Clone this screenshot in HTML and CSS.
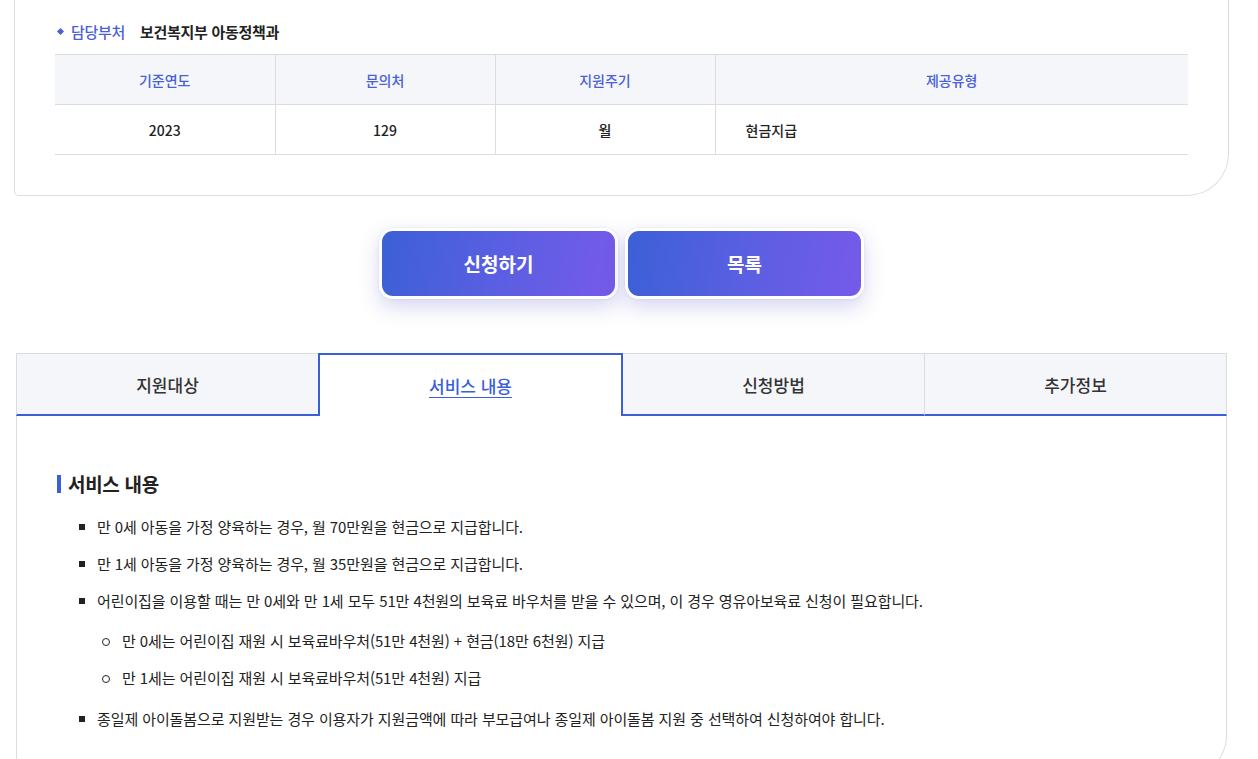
FILE: index.html
```html
<!DOCTYPE html>
<html lang="ko">
<head>
<meta charset="utf-8">
<link rel="stylesheet" href="styles.css">
</head>
<body>
<div class="wrap">
  <section class="card">
    <div class="dept">
      <span class="dot"></span>
      <span class="dept-label">담당부처</span>
      <span class="dept-value">보건복지부 아동정책과</span>
    </div>
    <table class="info">
      <thead>
        <tr><th class="c1">기준연도</th><th class="c2">문의처</th><th class="c3">지원주기</th><th class="c4">제공유형</th></tr>
      </thead>
      <tbody>
        <tr><td>2023</td><td>129</td><td>월</td><td class="left">현금지급</td></tr>
      </tbody>
    </table>
  </section>

  <div class="actions">
    <a class="btn">신청하기</a>
    <a class="btn">목록</a>
  </div>

  <section class="tabs-box">
    <nav class="tabs">
      <div class="tab">지원대상</div>
      <div class="tab active"><span>서비스 내용</span></div>
      <div class="tab">신청방법</div>
      <div class="tab">추가정보</div>
    </nav>
    <div class="panel">
      <h3 class="panel-title">서비스 내용</h3>
      <ul class="list">
        <li>만 0세 아동을 가정 양육하는 경우, 월 70만원을 현금으로 지급합니다.</li>
        <li>만 1세 아동을 가정 양육하는 경우, 월 35만원을 현금으로 지급합니다.</li>
        <li>어린이집을 이용할 때는 만 0세와 만 1세 모두 51만 4천원의 보육료 바우처를 받을 수 있으며, 이 경우 영유아보육료 신청이 필요합니다.
          <ul class="sub">
            <li>만 0세는 어린이집 재원 시 보육료바우처(51만 4천원) + 현금(18만 6천원) 지급</li>
            <li>만 1세는 어린이집 재원 시 보육료바우처(51만 4천원) 지급</li>
          </ul>
        </li>
        <li>종일제 아이돌봄으로 지원받는 경우 이용자가 지원금액에 따라 부모급여나 종일제 아이돌봄 지원 중 선택하여 신청하여야 합니다.</li>
      </ul>
    </div>
  </section>
</div>
</body>
</html>
```

FILE: styles.css
```css
* { box-sizing: border-box; }
html, body { margin: 0; padding: 0; background: #fff; }
body {
  font-family: "Noto Sans CJK KR", "Noto Sans", sans-serif;
  color: #222;
}
.wrap {
  width: 1215px;
  margin-left: 14px;
}
.card {
  border: 1px solid #dedede;
  border-top: none;
  border-bottom-right-radius: 42px;
  border-bottom-left-radius: 5px;
  padding: 20px 40px 40px 40px;
}
.dept {
  display: flex;
  align-items: center;
  height: 22px;
  font-size: 15px;
  font-weight: 700;
  letter-spacing: -0.3px;
}
.dot {
  width: 5px;
  height: 5px;
  background: #4a62d8;
  transform: rotate(45deg);
  margin: 0 8px 0 3px;
}
.dept-label { color: #4a5fd8; margin-right: 15px; font-weight: 500; }
.dept-value { color: #222; }
.info {
  width: 100%;
  margin-top: 12px;
  border-collapse: collapse;
  table-layout: fixed;
  font-size: 14px;
}
.info th {
  background: #f5f6fa;
  color: #4a5fd8;
  font-weight: 500;
  height: 50px;
  border-top: 1px solid #dcdcdc;
  border-bottom: 1px solid #dcdcdc;
  border-left: 1px solid #dcdcdc;
}
.info th:first-child, .info td:first-child { border-left: none; }
.info .c1, .info .c2, .info .c3 { width: 220px; }
.info td {
  height: 50px;
  text-align: center;
  font-weight: 500;
  color: #222;
  border-bottom: 1px solid #dcdcdc;
  border-left: 1px solid #dcdcdc;
}
.info td.left { text-align: left; padding-left: 30px; }

.actions {
  display: flex;
  justify-content: center;
  gap: 7px;
  margin-top: 32px;
}
.btn {
  width: 239px;
  height: 71px;
  display: flex;
  align-items: center;
  justify-content: center;
  border: 3px solid #fff;
  border-radius: 14px;
  background: linear-gradient(100deg, #3b60d6 0%, #5a5fe2 50%, #765ae9 100%);
  color: #fff;
  font-size: 19px;
  font-weight: 700;
  box-shadow: 0 8px 20px rgba(90, 90, 200, 0.25), 0 0 2px rgba(90, 90, 200, 0.2);
}

.tabs-box {
  margin: 54px 2px 0 2px;
}
.tabs {
  display: flex;
}
.tab {
  flex: 1;
  height: 63px;
  display: flex;
  align-items: center;
  justify-content: center;
  background: #f5f6fa;
  border-top: 1px solid #dcdcdc;
  border-left: 1px solid #dcdcdc;
  border-bottom: 2px solid #3b5fd8;
  font-size: 17px;
  font-weight: 500;
  color: #333;
}
.tab:last-child { border-right: 1px solid #dcdcdc; }
.tab.active {
  background: #fff;
  border: 2px solid #3b5fd8;
  border-bottom: none;
  color: #3b5fd8;
}
.tab.active + .tab { border-left: none; }
.tab.active span { text-decoration: underline; text-underline-offset: 4px; }

.panel {
  border-left: 1px solid #dcdcdc;
  border-right: 1px solid #dcdcdc;
  border-bottom: 1px solid #dcdcdc;
  border-radius: 0 0 40px 20px;
  padding: 59px 40px 30px 40px;
  min-height: 360px;
}
.panel-title {
  margin: 0 0 23px 0;
  font-size: 19px;
  font-weight: 700;
  color: #222;
  line-height: 26px;
  border-left: 4px solid #3b5fd8;
  padding-left: 7px;
  height: 18px;
  display: flex;
  align-items: center;
  letter-spacing: -0.3px;
}
.list {
  list-style: none;
  margin: 0;
  padding: 0 0 0 22px;
  font-size: 15px;
  color: #222;
  letter-spacing: -0.1px;
}
.list > li {
  position: relative;
  padding-left: 18px;
  line-height: 22px;
  margin-top: 15px;
}
.list > li:first-child { margin-top: 0; }
.list > li::before {
  content: "";
  position: absolute;
  left: 0;
  top: 8px;
  width: 6px;
  height: 6px;
  background: #222;
}
.sub {
  list-style: none;
  margin: 18px 0 19px 0;
  padding: 0 0 0 5px;
}
.sub > li {
  position: relative;
  padding-left: 20px;
  line-height: 22px;
  margin-top: 15px;
}
.sub > li:first-child { margin-top: 0; }
.sub > li::before {
  content: "";
  position: absolute;
  left: 0;
  top: 8px;
  width: 6px;
  height: 6px;
  border: 1px solid #222;
  border-radius: 50%;
}
```
